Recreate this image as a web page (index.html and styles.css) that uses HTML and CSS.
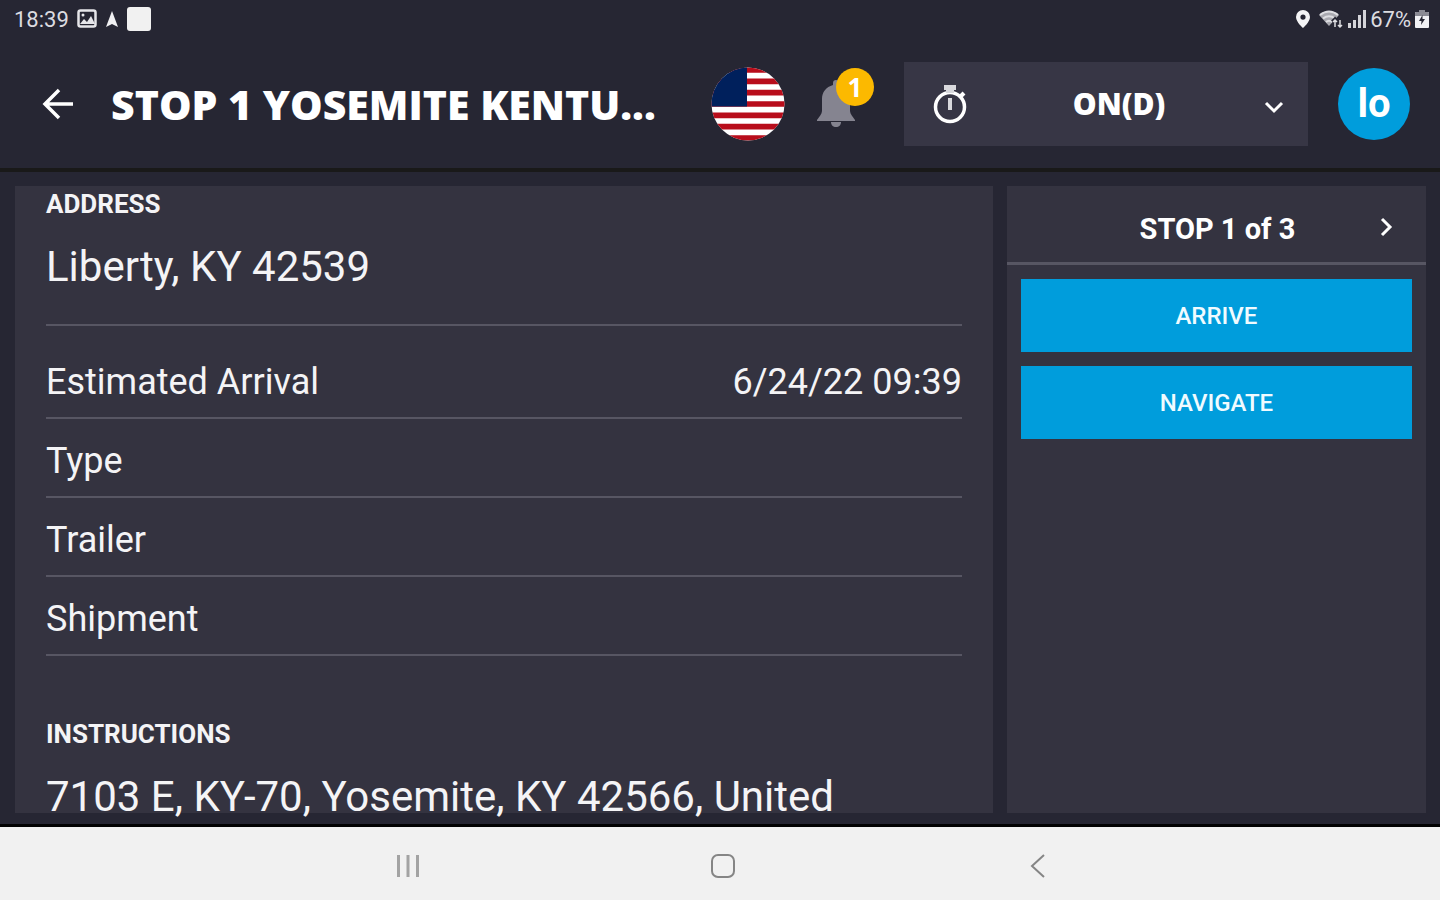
FILE: index.html
```html
<!DOCTYPE html>
<html lang="en">
<head>
<meta charset="utf-8">
<meta name="viewport" content="width=device-width, initial-scale=1">
<title>Stop details</title>
<link rel="stylesheet" href="styles.css">
</head>
<body>
<div class="status-bar">
  <div class="status-group">
    <span class="clock">18:39</span>
    <svg width="20" height="20" viewBox="0 0 20 20" fill="none" stroke="#e6e6ea" stroke-width="2.500"><rect x="1.500" y="1.500" width="17" height="16" rx="2"/><path d="M3 15l4-5 3 3 4-6 4 8z" fill="#e6e6ea" stroke="none"/><circle cx="6" cy="6" r="1.500" fill="#e6e6ea" stroke="none"/></svg>
    <svg class="nav-arrow" width="14" height="18" viewBox="0 0 14 18" fill="#f0f0f2"><path d="M7 1l6 16-6-3-6 3z"/></svg>
    <svg width="24" height="24" viewBox="0 0 24 24"><rect width="24" height="24" rx="3" fill="#f1f1f1"/></svg>
  </div>
  <div class="status-group status-right">
    <svg class="pin" width="16" height="20" viewBox="0 0 16 20"><path d="M8 1a7 7 0 0 0-7 7c0 5 7 11 7 11s7-6 7-11a7 7 0 0 0-7-7zm0 4.500a2.600 2.600 0 1 1 0 5.200a2.600 2.600 0 0 1 0-5.200z" fill="#f4f4f6"/></svg>
    <svg width="26" height="20" viewBox="0 0 26 20" fill="none"><path d="M1 6Q11-2 21 6L11 17z" fill="#a9a9b0"/><path d="M2 6Q11-1 20 6M5 9.500Q11 5 17 9.500M8 13Q11 10.500 14 13" stroke="#dedee2" stroke-width="2"/><path d="M17 18v-7M14.500 13L17 10.500 19 13M22 11v7M19.500 15.500L22 18l2.500-2.500" stroke="#262633" stroke-width="4"/><path d="M17 18v-7M15 13L17 11 19 13M22 11v7M20 16L22 18l2-2" stroke="#dedee2" stroke-width="1.500"/></svg>
    <svg width="20" height="20" viewBox="0 0 20 20" fill="#d4d4d9"><path d="M1 14h3v5H1zM6 11h3v8H6zM11 6h3v13h-3zM16 1h3v18h-3z"/></svg>
    <span class="battery-level">67%</span>
    <svg width="16" height="20" viewBox="0 0 16 20"><path d="M5 1h6v2h3a1 1 0 0 1 1 1v14a1 1 0 0 1-1 1H2a1 1 0 0 1-1-1V4a1 1 0 0 1 1-1h3z" fill="#f1f1f4"/><path d="M1 7V4a1 1 0 0 1 1-1h3V1h6v2h3a1 1 0 0 1 1 1v3z" fill="#8b8b94"/><path d="M8.500 6L5 12h2.500L7 16l4-6H8.500z" fill="#262633"/></svg>
  </div>
</div>

<header class="app-header">
  <button class="icon-button" type="button" aria-label="Back">
    <svg width="32" height="32" viewBox="0 0 32 32" fill="none" stroke="#fff" stroke-width="3.500"><path d="M17 2L3 16l14 14M3 16h28"/></svg>
  </button>
  <h1 class="title">STOP 1 YOSEMITE KENTU...</h1>
  <button class="icon-button" type="button" aria-label="Country: United States">
    <svg width="74" height="74" viewBox="0 0 74 74"><defs><clipPath id="disc"><circle cx="37" cy="37" r="36.500"/></clipPath></defs><g clip-path="url(#disc)"><path fill="#fff" d="M0 0h74v74H0z"/><path stroke="#b80d1b" stroke-width="5.700" d="M0 3h74M0 14.300h74M0 25.700h74M0 37h74M0 48.300h74M0 59.700h74M0 71h74"/><path fill="#00205c" d="M0 0h36v39.500H0z"/></g></svg>
  </button>
  <button class="icon-button bell" type="button" aria-label="Notifications">
    <svg width="40" height="48" viewBox="0 0 40 48" fill="#858490"><path d="M20 0c2 0 3 1 3 3v2c7 2 11 7 11 14v12c0 3 3 6 5 9v1H1v-1c2-3 5-6 5-9V19C6 12 10 7 17 5V3c0-2 1-3 3-3z"/><path d="M15 42h10c0 3-2 5-5 5s-5-2-5-5z"/></svg>
    <span class="badge">1</span>
  </button>
  <div class="duty">
    <svg class="stopwatch" width="36" height="40" viewBox="0 0 36 40" fill="none" stroke="#fff"><circle cx="18" cy="23" r="14.500" stroke-width="3.500"/><path d="M12 1h12v5h-2v3h-8V6h-2z" fill="#d9d9dd" stroke="none"/><path d="M28 13l4-4" stroke-width="4"/><path d="M18 14v12" stroke="#d9d9dd" stroke-width="4"/></svg>
    <select class="duty-select" aria-label="Duty status"><option>ON(D)</option></select>
    <svg class="duty-chevron" width="20" height="14" viewBox="0 0 20 14" fill="none" stroke="#fff" stroke-width="3"><path d="M2 3l8 8 8-8"/></svg>
  </div>
  <button class="avatar" type="button">lo</button>
</header>

<main class="content">
  <section class="panel details">
    <h2 class="heading">ADDRESS</h2>
    <p class="lead">Liberty, KY 42539</p>
    <dl class="rows">
      <div class="row"><dt>Estimated Arrival</dt><dd>6/24/22 09:39</dd></div>
      <div class="row"><dt>Type</dt><dd></dd></div>
      <div class="row"><dt>Trailer</dt><dd></dd></div>
      <div class="row"><dt>Shipment</dt><dd></dd></div>
    </dl>
    <h2 class="heading">INSTRUCTIONS</h2>
    <p class="lead">7103 E, KY-70, Yosemite, KY 42566, United</p>
  </section>
  <aside class="panel">
    <div class="stepper">
      <span class="step-label">STOP 1 of 3</span>
      <button class="icon-button" type="button" aria-label="Next stop">
        <svg width="14" height="20" viewBox="0 0 14 20" fill="none" stroke="#fff" stroke-width="3"><path d="M2 2l8 8-8 8"/></svg>
      </button>
    </div>
    <div class="actions">
      <button class="action" type="button">ARRIVE</button>
      <button class="action" type="button">NAVIGATE</button>
    </div>
  </aside>
</main>

<nav class="system-nav" aria-label="System">
  <button class="icon-button" type="button" aria-label="Recent apps">
    <svg width="24" height="24" viewBox="0 0 24 24" stroke="#a3a3a3" stroke-width="3"><path d="M2.500 1v22M12 1v22M21.500 1v22"/></svg>
  </button>
  <button class="icon-button" type="button" aria-label="Home">
    <svg width="24" height="24" viewBox="0 0 24 24" fill="none" stroke="#858585" stroke-width="2"><rect x="1" y="1" width="22" height="22" rx="6"/></svg>
  </button>
  <button class="icon-button" type="button" aria-label="System back">
    <svg width="24" height="24" viewBox="0 0 24 24" fill="none" stroke="#858585" stroke-width="2"><path d="M18 1L6 12l12 11"/></svg>
  </button>
</nav>
</body>
</html>
```
FILE: styles.css
```css
* {
  box-sizing: border-box;
}

body {
  margin: 0;
  height: 100vh;
  display: flex;
  flex-direction: column;
  overflow: hidden;
  background: #262633;
  color: #f4f4f6;
  font-family: Roboto, sans-serif;
}

svg {
  display: block;
  flex: none;
}

h1, h2, p, dl, dd {
  margin: 0;
}

button, select {
  border: 0;
  padding: 0;
  background: transparent;
  color: inherit;
  font-family: inherit;
}

.icon-button {
  display: block;
  flex: none;
}

.status-bar {
  flex: none;
  display: flex;
  justify-content: space-between;
  height: 38px;
  padding: 0 10px 0 14px;
  color: #dcdce0;
  font-size: 22px;
}

.status-group {
  display: flex;
  align-items: center;
  gap: 8px;
}

.status-right {
  gap: 3px;
}

.pin {
  margin-right: 4px;
}

.app-header {
  flex: none;
  display: flex;
  align-items: center;
  height: 134px;
  padding: 2px 30px 0 42px;
  border-bottom: 4px solid #191919;
}

.title {
  flex: 1;
  min-width: 0;
  margin-left: 37px;
  overflow: hidden;
  color: #fff;
  font: 800 41px/56px "Open Sans", sans-serif;
  white-space: nowrap;
}

.bell {
  position: relative;
  margin: 0 48px 0 31px;
}

.badge {
  position: absolute;
  top: -12px;
  right: -18px;
  width: 38px;
  height: 38px;
  border-radius: 50%;
  background: #fcb900;
  color: #fff;
  font: 700 26px/38px "Open Sans", sans-serif;
}

.duty {
  position: relative;
  flex: 0 1 404px;
  height: 84px;
  margin-right: 30px;
  background: #373645;
}

.duty-select {
  width: 100%;
  height: 100%;
  padding: 0 46px 0 72px;
  appearance: none;
  color: #fff;
  font: 800 30px/40px "Open Sans", sans-serif;
  text-align: center;
  text-align-last: center;
}

.stopwatch {
  position: absolute;
  top: 22px;
  left: 28px;
  pointer-events: none;
}

.duty-chevron {
  position: absolute;
  top: 38px;
  right: 24px;
  pointer-events: none;
}

.avatar {
  flex: none;
  width: 72px;
  height: 72px;
  border-radius: 50%;
  background: #009ddc;
  color: #fff;
  font-size: 40px;
  font-weight: 700;
  line-height: 72px;
}

.content {
  flex: 1;
  min-height: 0;
  display: grid;
  grid-template-columns: 7fr 3fr;
  grid-template-rows: minmax(0, 1fr);
  gap: 14px;
  padding: 14px 14px 11px 15px;
  overflow: hidden;
}

.panel {
  min-width: 0;
  background: #343340;
}

.details {
  padding: 2px 31px 0;
}

.heading {
  font-size: 26px;
  font-weight: 700;
  line-height: 32px;
}

.lead {
  margin-top: 21px;
  font-size: 42px;
  line-height: 52px;
  white-space: nowrap;
}

.rows {
  margin: 31px 0 62px;
  padding-top: 14px;
  border-top: 2px solid #575663;
}

.row {
  display: flex;
  justify-content: space-between;
  padding: 20px 0 13px;
  border-bottom: 2px solid #575663;
  font-size: 36px;
  line-height: 44px;
}

.stepper {
  display: grid;
  grid-template-columns: 1fr auto;
  align-items: center;
  height: 79px;
  padding: 6px 32px 0 48px;
  border-bottom: 3px solid #575663;
  color: #fff;
  font-size: 29px;
  font-weight: 700;
  text-align: center;
}

.step-label {
  padding-top: 4px;
}

.actions {
  display: grid;
  gap: 14px;
  padding: 14px;
}

.action {
  height: 73px;
  background: #009ddc;
  color: #f0fbff;
  font-size: 24px;
  font-weight: 500;
}

.system-nav {
  flex: none;
  display: flex;
  justify-content: center;
  align-items: center;
  gap: 291px;
  height: 76px;
  padding: 4px 0 0 6px;
  border-top: 3px solid #020202;
  background: #f1f1f1;
}
```
